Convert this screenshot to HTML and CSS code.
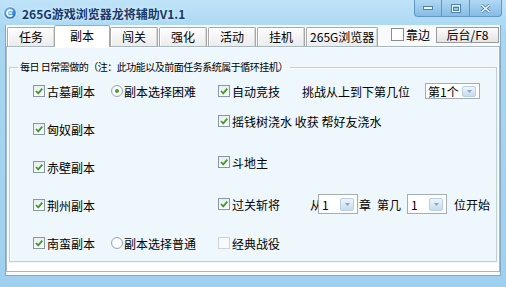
FILE: index.html
```html
<!DOCTYPE html>
<html lang="zh-CN">
<head>
  <meta charset="UTF-8" />
  <title>265G游戏浏览器龙将辅助V1.1</title>
  <link rel="stylesheet" href="styles.css">
</head>
<body>
  <div class="window">
    <div class="titlebar">
      <svg class="app-icon" viewBox="0 0 14 14">
        <defs>
          <radialGradient id="ball" cx="40%" cy="35%" r="70%">
            <stop offset="0" stop-color="#7cc6f7"/>
            <stop offset="1" stop-color="#1565be"/>
          </radialGradient>
        </defs>
        <circle cx="7" cy="7" r="6.3" fill="url(#ball)" stroke="#e4f3fd" stroke-width="1"/>
        <path d="M9.6 5.2 A3.1 3.1 0 1 0 9.4 9.2" fill="none" stroke="#fff" stroke-width="1.7"/>
        <path d="M5.6 7.1 H9.2" stroke="#fff" stroke-width="1.3"/>
      </svg>
      <span class="title">265G游戏浏览器龙将辅助V1.1</span>
      <div class="controls">
        <span class="ctl ctl-min">
          <svg width="10" height="4" viewBox="0 0 10 4"><rect x="0.5" y="0.5" width="9" height="3" fill="#f1f8fd" stroke="#4f7fab"/></svg>
        </span>
        <span class="ctl ctl-max">
          <svg width="10" height="9" viewBox="0 0 10 9"><rect x="0.5" y="0.5" width="9" height="8" fill="none" stroke="#4f7fab"/><rect x="1.5" y="1.5" width="7" height="6" fill="none" stroke="#f1f8fd"/><rect x="2.5" y="3.5" width="5" height="3" fill="none" stroke="#4f7fab"/></svg>
        </span>
        <span class="ctl ctl-close">
          <svg width="11" height="9" viewBox="0 0 11 9"><path d="M1.5 1 L9.5 8 M9.5 1 L1.5 8" stroke="#4f7fab" stroke-width="3"/><path d="M1.5 1 L9.5 8 M9.5 1 L1.5 8" stroke="#f1f8fd" stroke-width="1.6"/></svg>
        </span>
      </div>
    </div>

    <div class="client">
      <div class="tabbar">
        <span class="tab">任务</span>
        <span class="tab active">副本</span>
        <span class="tab">闯关</span>
        <span class="tab">强化</span>
        <span class="tab">活动</span>
        <span class="tab">挂机</span>
        <span class="tab tab-wide">265G浏览器</span>
        <label class="dock"><span class="dock-box"></span>靠边</label>
        <button class="btn">后台/F8</button>
      </div>

      <div class="panel">
        <div class="page">
          <fieldset class="group">
            <legend>每日 日常需做的（注：此功能以及前面任务系统属于循环挂机）</legend>
            <div class="cols">
              <div class="col col-left">
                <div class="row">
                  <span class="chk"><svg viewBox="0 0 10 10"><path d="M2 5 L4.2 7.3 L8.3 2.6" fill="none" stroke="#3f9a27" stroke-width="1.8"/></svg></span>
                  <span>古墓副本</span>
                  <span class="radio on"></span>
                  <span>副本选择困难</span>
                </div>
                <div class="row">
                  <span class="chk"><svg viewBox="0 0 10 10"><path d="M2 5 L4.2 7.3 L8.3 2.6" fill="none" stroke="#3f9a27" stroke-width="1.8"/></svg></span>
                  <span>匈奴副本</span>
                </div>
                <div class="row">
                  <span class="chk"><svg viewBox="0 0 10 10"><path d="M2 5 L4.2 7.3 L8.3 2.6" fill="none" stroke="#3f9a27" stroke-width="1.8"/></svg></span>
                  <span>赤壁副本</span>
                </div>
                <div class="row">
                  <span class="chk"><svg viewBox="0 0 10 10"><path d="M2 5 L4.2 7.3 L8.3 2.6" fill="none" stroke="#3f9a27" stroke-width="1.8"/></svg></span>
                  <span>荆州副本</span>
                </div>
                <div class="row">
                  <span class="chk"><svg viewBox="0 0 10 10"><path d="M2 5 L4.2 7.3 L8.3 2.6" fill="none" stroke="#3f9a27" stroke-width="1.8"/></svg></span>
                  <span>南蛮副本</span>
                  <span class="radio"></span>
                  <span>副本选择普通</span>
                </div>
              </div>

              <div class="col col-right">
                <div class="row">
                  <span class="chk"><svg viewBox="0 0 10 10"><path d="M2 5 L4.2 7.3 L8.3 2.6" fill="none" stroke="#3f9a27" stroke-width="1.8"/></svg></span>
                  <span>自动竞技</span>
                  <span class="ask">挑战从上到下第几位</span>
                  <span class="combo combo-rank"><span class="val">第1个</span><span class="drop"><svg width="5" height="3" viewBox="0 0 5 3"><path d="M0 0 H5 L2.5 3 Z" fill="#8aa6bf"/></svg></span></span>
                </div>
                <div class="row row-tree">
                  <span class="chk"><svg viewBox="0 0 10 10"><path d="M2 5 L4.2 7.3 L8.3 2.6" fill="none" stroke="#3f9a27" stroke-width="1.8"/></svg></span>
                  <span>摇钱树浇水 收获 帮好友浇水</span>
                </div>
                <div class="row row-ddz">
                  <span class="chk"><svg viewBox="0 0 10 10"><path d="M2 5 L4.2 7.3 L8.3 2.6" fill="none" stroke="#3f9a27" stroke-width="1.8"/></svg></span>
                  <span>斗地主</span>
                </div>
                <div class="row row-ggzj">
                  <span class="chk"><svg viewBox="0 0 10 10"><path d="M2 5 L4.2 7.3 L8.3 2.6" fill="none" stroke="#3f9a27" stroke-width="1.8"/></svg></span>
                  <span>过关斩将</span>
                  <span class="from">从</span>
                  <span class="combo combo-num"><span class="val">1</span><span class="drop"><svg width="5" height="3" viewBox="0 0 5 3"><path d="M0 0 H5 L2.5 3 Z" fill="#8aa6bf"/></svg></span></span>
                  <span class="zhang">章</span>
                  <span class="diji">第几</span>
                  <span class="combo combo-num combo-pos"><span class="val">1</span><span class="drop"><svg width="5" height="3" viewBox="0 0 5 3"><path d="M0 0 H5 L2.5 3 Z" fill="#8aa6bf"/></svg></span></span>
                  <span class="start">位开始</span>
                </div>
                <div class="row row-jd">
                  <span class="chk off"></span>
                  <span>经典战役</span>
                </div>
              </div>
            </div>
          </fieldset>
        </div>
      </div>
    </div>
  </div>
</body>
</html>
```

FILE: styles.css
```css
body {
  margin: 0;
  font-family: "Noto Sans CJK SC", "Noto Sans", sans-serif;
  font-size: 12px;
  color: #000;
  background: #fff;
}
.window {
  width: 506px;
  height: 287px;
  display: flex;
  flex-direction: column;
  background: linear-gradient(#bfe3f8, #a9d7f2 30px, #9fd0ef);
  overflow: hidden;
}

/* title bar */
.titlebar {
  height: 25px;
  display: flex;
  align-items: flex-start;
  flex-shrink: 0;
}
.app-icon {
  width: 14px;
  height: 14px;
  margin: 6px 0 0 3px;
}
.title {
  margin: 7px 0 0 5px;
  line-height: 14px;
  font-weight: bold;
  color: #17396a;
  text-shadow: 0 0 4px #eaf6ff;
}
.controls {
  margin-left: auto;
  margin-right: 4px;
  display: flex;
}
.ctl {
  width: 28px;
  height: 17px;
  box-sizing: border-box;
  display: flex;
  align-items: center;
  justify-content: center;
  background: linear-gradient(#b0d8f3, #86bce5);
  border: 1px solid #6196c6;
  border-top: none;
  border-left: none;
}
.ctl-min {
  border-left: 1px solid #6196c6;
  border-radius: 0 0 0 4px;
}
.ctl-close {
  width: 32px;
  border-radius: 0 0 4px 0;
}

/* client area */
.client {
  margin: 0 5px;
  border: 1px solid #86a9c3;
  border-top: none;
  background: #f8fafb;
  padding-bottom: 3px;
}
.tabbar {
  height: 21px;
  display: flex;
  align-items: flex-end;
  padding-left: 1px;
}
.tab {
  height: 19px;
  box-sizing: border-box;
  padding: 0 11px;
  margin-right: 1px;
  line-height: 18px;
  border: 1px solid #a8a8a8;
  border-bottom: none;
  border-radius: 2px 2px 0 0;
  background: linear-gradient(#fdfdfd, #ececec);
  box-shadow: inset 1px 1px #fff, inset -1px 0 #d6d6d6;
  white-space: nowrap;
}
.tab.active {
  height: 22px;
  padding: 0 15px;
  margin: 0 0 -1px -2px;
  line-height: 20px;
  background: #fff;
  box-shadow: none;
  position: relative;
  z-index: 1;
}
.tab-wide {
  padding: 0 3px;
}
.dock {
  margin: 2px 6px 0 auto;
  align-self: flex-start;
  display: flex;
  align-items: center;
  gap: 2px;
  height: 14px;
}
.dock-box {
  width: 13px;
  height: 13px;
  box-sizing: border-box;
  border: 1px solid #8c8c8c;
  background: #fff;
}
.btn {
  align-self: flex-start;
  margin: 2px 1px 0 0;
  width: 63px;
  height: 16px;
  padding: 0;
  font: inherit;
  line-height: 14px;
  border: 1px solid #9b9b9b;
  background: linear-gradient(#fbfbfb, #e4e4e4);
  color: #000;
}

/* tab page */
.panel {
  border: 1px solid #a6b8c6;
  background: #fff;
  padding: 1px 1px 8px 1px;
}
.page {
  background: #eef7fb;
  padding: 13px 1px 1px 1px;
}
.group {
  margin: 0;
  padding: 8px 0 8px 0;
  min-width: 0;
  border: 1px solid #bcd0dd;
  box-shadow: inset 1px 1px #fbfdfe;
}
.group legend {
  margin-left: 8px;
  padding: 0 2px;
  font-size: 10px;
  line-height: 12px;
  letter-spacing: -0.5px;
}
.cols {
  display: grid;
  grid-template-columns: 185px 1fr;
  margin-left: 23px;
}
.col {
  display: flex;
  flex-direction: column;
}
.col-left {
  gap: 18px;
}
.row {
  height: 20px;
  display: flex;
  align-items: center;
  white-space: nowrap;
}
.row-tree { margin-top: 10px; }
.row-ddz { margin-top: 21px; }
.row-ggzj { margin-top: 22px; }
.row-jd { margin-top: 19px; }

/* check boxes and radios */
.chk {
  width: 12px;
  height: 12px;
  box-sizing: border-box;
  border: 1px solid #8797a4;
  background: linear-gradient(#e8edf1, #fdfdfd);
  margin-right: 2px;
  display: flex;
  flex-shrink: 0;
}
.chk svg {
  width: 10px;
  height: 10px;
}
.chk.off {
  border-color: #c9d3db;
  background: #f8fbfc;
}
.radio {
  width: 12px;
  height: 12px;
  box-sizing: border-box;
  border-radius: 50%;
  border: 1px solid #9aa7b3;
  background: radial-gradient(#fff 40%, #e2e8ed);
  margin: 0 1px 0 16px;
  display: flex;
  align-items: center;
  justify-content: center;
}
.radio.on::after {
  content: "";
  width: 4px;
  height: 4px;
  border-radius: 50%;
  background: #4c9e2b;
}

/* right column extras */
.ask {
  margin-left: 22px;
}
.combo {
  display: flex;
  align-items: center;
  box-sizing: border-box;
  border: 1px solid #a3adb6;
  background: #fff;
  padding: 0 3px 0 2px;
}
.combo .val {
  flex: 1;
}
.combo-rank {
  margin-left: 15px;
  width: 55px;
  height: 16px;
}
.combo-rank .drop {
  height: 11px;
}
.combo-num {
  width: 40px;
  height: 20px;
  padding-left: 3px;
}
.drop {
  width: 14px;
  height: 13px;
  box-sizing: border-box;
  border: 1px solid #b9d0e3;
  border-radius: 2px;
  background: linear-gradient(#eef5fb, #c6dcef);
  display: flex;
  align-items: center;
  justify-content: center;
}
.from {
  margin-left: 30px;
  width: 8px;
  overflow: hidden;
}
.zhang {
  margin-left: 1px;
}
.diji {
  margin-left: 6px;
}
.combo-pos {
  margin-left: 6px;
}
.start {
  margin-left: 7px;
}
```
